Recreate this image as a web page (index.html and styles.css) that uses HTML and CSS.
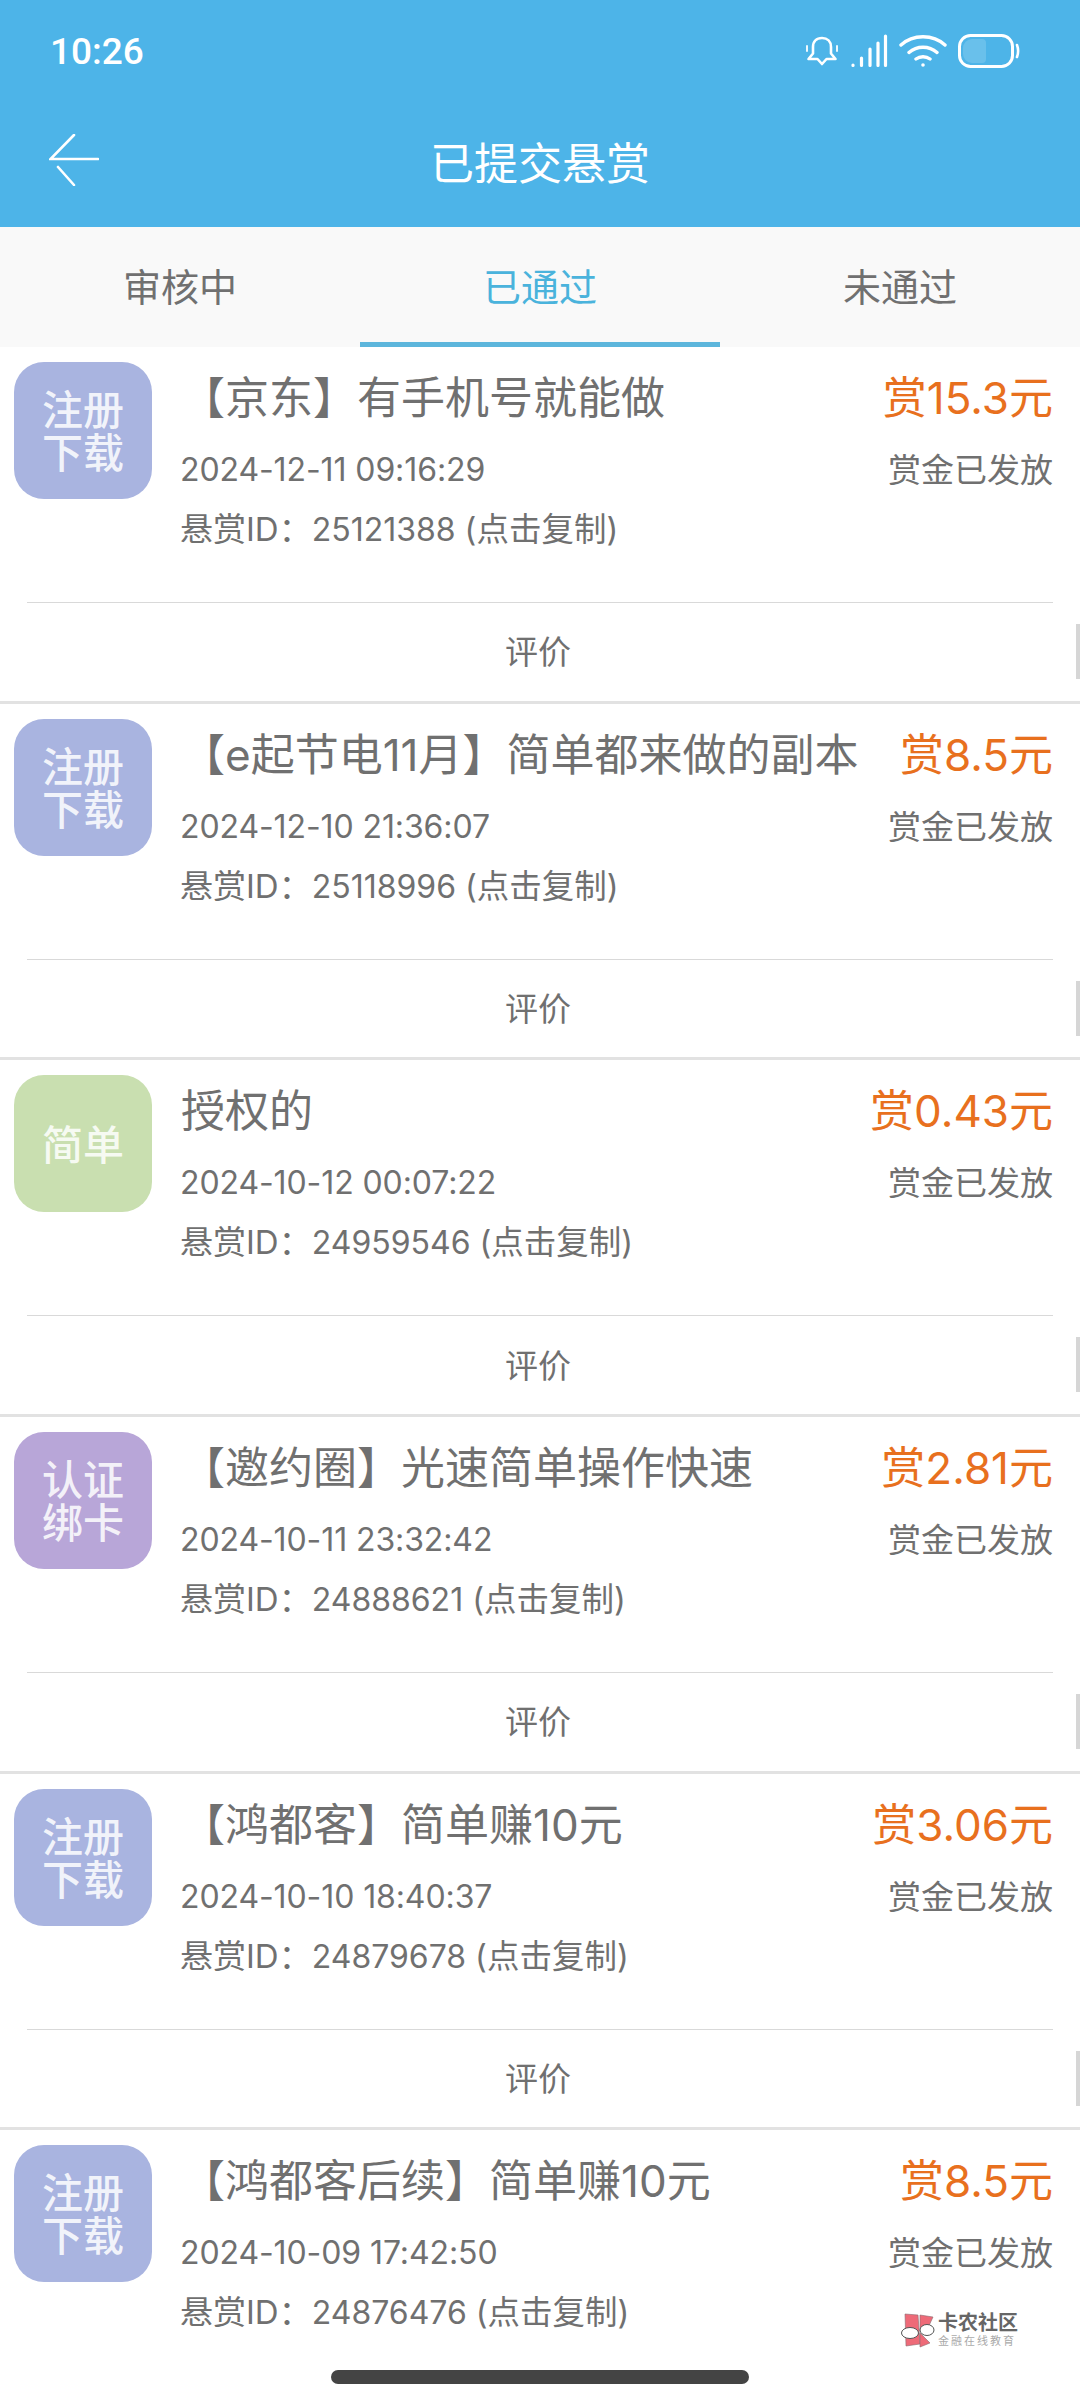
FILE: index.html
```html
<!DOCTYPE html>
<html lang="zh">
<head>
  <meta charset="UTF-8">
  <title>已提交悬赏</title>
  <link rel="stylesheet" href="styles.css">
</head>
<body>

<header class="top">
  <div class="status">
    <span class="time">10:26</span>
    <div class="status-icons">
      <svg class="ic-bell" viewBox="0 0 34 34" fill="none" stroke="#fff" stroke-width="2.6" stroke-linejoin="round" stroke-linecap="round">
        <path d="M17 4c-5.500 0-9 3.500-9 9v6.500L3.500 25h9L17 30l4.500-5h9L26 19.500V13c0-5.500-3.500-9-9-9z"/>
        <path d="M2 12v5M32 12v5" stroke-width="1.800"/>
      </svg>
      <svg class="ic-signal" viewBox="0 0 38 34" fill="none" stroke="#fff" stroke-width="3.200" stroke-linecap="round">
        <path d="M3 31v.5M11.500 24v7.500M20 15v16.500M28 9v22.500M35.500 2v29.500"/>
      </svg>
      <svg class="ic-wifi" viewBox="0 0 48 34" fill="none" stroke="#fff" stroke-width="3.400" stroke-linecap="round">
        <path d="M2 11C14 0 34 0 46 11M10 18.500c8-7 20-7 28 0M17 25c4-3 10-3 14 0"/>
        <circle cx="24" cy="31" r="1.800" fill="#fff" stroke="none"/>
      </svg>
      <svg class="ic-battery" viewBox="0 0 62 34" fill="none">
        <rect x="1.500" y="1.500" width="53" height="31" rx="11" stroke="#fff" stroke-width="3"/>
        <path d="M5 14a9 9 0 0 1 9-9h10a4 4 0 0 1 4 4v16a4 4 0 0 1-4 4H14a9 9 0 0 1-9-9z" fill="#fff" fill-opacity=".16"/>
        <path d="M59 11c1.500 4 1.500 8 0 12" stroke="#fff" stroke-width="2.600" stroke-linecap="round"/>
      </svg>
    </div>
  </div>
  <div class="navbar">
    <svg class="back" viewBox="0 0 50 52" fill="none" stroke="#fff" stroke-width="2.600" stroke-linecap="round">
      <path d="M25 1L1.500 25H49M9 33l16 18"/>
    </svg>
    <h1>已提交悬赏</h1>
  </div>
</header>

<nav class="tabs">
  <div class="tab">审核中</div>
  <div class="tab active">已通过</div>
  <div class="tab">未通过</div>
</nav>

<main class="list">
  <section class="card">
    <div class="card-main">
      <div class="badge blue">注册<br>下载</div>
      <div class="info">
        <div class="title">【京东】有手机号就能做</div>
        <div class="meta date">2024-12-11 09:16:29</div>
        <div class="meta"><span class="label">悬赏ID：</span>25121388 <span class="hint">(点击复制)</span></div>
      </div>
      <div class="side">
        <div class="reward">赏15.3元</div>
        <div class="paid">赏金已发放</div>
      </div>
    </div>
    <div class="action">评价</div>
    <i class="edge"></i>
  </section>

  <section class="card">
    <div class="card-main">
      <div class="badge blue">注册<br>下载</div>
      <div class="info">
        <div class="title">【e起节电11月】简单都来做的副本</div>
        <div class="meta date">2024-12-10 21:36:07</div>
        <div class="meta"><span class="label">悬赏ID：</span>25118996 <span class="hint">(点击复制)</span></div>
      </div>
      <div class="side">
        <div class="reward">赏8.5元</div>
        <div class="paid">赏金已发放</div>
      </div>
    </div>
    <div class="action">评价</div>
    <i class="edge"></i>
  </section>

  <section class="card">
    <div class="card-main">
      <div class="badge green">简单</div>
      <div class="info">
        <div class="title">授权的</div>
        <div class="meta date">2024-10-12 00:07:22</div>
        <div class="meta"><span class="label">悬赏ID：</span>24959546 <span class="hint">(点击复制)</span></div>
      </div>
      <div class="side">
        <div class="reward">赏0.43元</div>
        <div class="paid">赏金已发放</div>
      </div>
    </div>
    <div class="action">评价</div>
    <i class="edge"></i>
  </section>

  <section class="card">
    <div class="card-main">
      <div class="badge purple">认证<br>绑卡</div>
      <div class="info">
        <div class="title">【邀约圈】光速简单操作快速</div>
        <div class="meta date">2024-10-11 23:32:42</div>
        <div class="meta"><span class="label">悬赏ID：</span>24888621 <span class="hint">(点击复制)</span></div>
      </div>
      <div class="side">
        <div class="reward">赏2.81元</div>
        <div class="paid">赏金已发放</div>
      </div>
    </div>
    <div class="action">评价</div>
    <i class="edge"></i>
  </section>

  <section class="card">
    <div class="card-main">
      <div class="badge blue">注册<br>下载</div>
      <div class="info">
        <div class="title">【鸿都客】简单赚10元</div>
        <div class="meta date">2024-10-10 18:40:37</div>
        <div class="meta"><span class="label">悬赏ID：</span>24879678 <span class="hint">(点击复制)</span></div>
      </div>
      <div class="side">
        <div class="reward">赏3.06元</div>
        <div class="paid">赏金已发放</div>
      </div>
    </div>
    <div class="action">评价</div>
    <i class="edge"></i>
  </section>

  <section class="card">
    <div class="card-main">
      <div class="badge blue">注册<br>下载</div>
      <div class="info">
        <div class="title">【鸿都客后续】简单赚10元</div>
        <div class="meta date">2024-10-09 17:42:50</div>
        <div class="meta"><span class="label">悬赏ID：</span>24876476 <span class="hint">(点击复制)</span></div>
      </div>
      <div class="side">
        <div class="reward">赏8.5元</div>
        <div class="paid">赏金已发放</div>
      </div>
    </div>
  </section>
</main>

<div class="watermark">
  <svg class="wm-logo" viewBox="0 0 36 36" stroke="#8a6a70" stroke-width=".6">
    <path d="M5 1l13 1 2 29-14 2z" fill="#ee6a78"/>
    <path d="M20 2l13 2-6 13-7 1z" fill="#ee6a78"/>
    <path d="M20 20l10 10-10 4z" fill="#ee6a78"/>
    <ellipse cx="10" cy="20" rx="8.500" ry="5.500" fill="#fff" stroke="#555" stroke-width="1"/>
    <ellipse cx="27" cy="17" rx="7" ry="5.500" fill="#fff" stroke="#555" stroke-width="1"/>
  </svg>
  <div class="wm-text">
    <div class="wm-name">卡农社区</div>
    <div class="wm-sub">金融在线教育</div>
  </div>
</div>

<div class="home-bar"></div>

</body>
</html>
```

FILE: styles.css
```css
* {
  box-sizing: border-box;
}
html, body {
  height: 2400px;
}
body {
  margin: 0;
  overflow: hidden;
  position: relative;
  background: #fff;
  color: #707070;
  font-family: Inter, "Noto Sans CJK SC", sans-serif;
}

/* header */
.top {
  height: 227px;
  background: #4db4e8;
  color: #fff;
}
.status {
  height: 104px;
  padding: 34px 60px 0 50px;
  display: flex;
  justify-content: space-between;
  align-items: flex-start;
}
.time {
  font-family: Roboto, sans-serif;
  font-size: 37px;
  line-height: 36px;
  font-weight: 500;
}
.status-icons {
  display: flex;
  align-items: center;
  gap: 11px;
}
.status-icons svg {
  display: block;
  height: 34px;
}
.ic-bell { width: 34px; }
.ic-signal { width: 38px; }
.ic-wifi { width: 48px; }
.ic-battery { width: 62px; }
.navbar {
  height: 123px;
  position: relative;
  display: flex;
  align-items: center;
  justify-content: center;
}
.navbar h1 {
  margin: 0 0 3px;
  font-size: 44px;
  line-height: 60px;
  font-weight: 400;
}
.back {
  position: absolute;
  left: 49px;
  top: 30px;
  width: 50px;
  height: 52px;
}

/* tabs */
.tabs {
  height: 120px;
  display: flex;
  background: #f9f9f9;
}
.tab {
  flex: 1;
  display: flex;
  align-items: center;
  justify-content: center;
  padding-bottom: 6px;
  font-size: 38px;
  color: #707070;
}
.tab.active {
  color: #4ab3dc;
  border-bottom: 5px solid #5db6dc;
  padding-bottom: 1px;
}

/* list */
.card {
  height: 356.7px;
  position: relative;
  display: flex;
  flex-direction: column;
  border-bottom: 3px solid #e2e2e2;
}
.card:last-child {
  border-bottom: 0;
}
.card-main {
  height: 256px;
  flex-shrink: 0;
  margin: 0 27px 0 14px;
  padding-top: 15px;
  display: flex;
  position: relative;
}
.card-main::after {
  content: "";
  position: absolute;
  left: 13px;
  right: 0;
  bottom: 0;
  height: 1px;
  background: #d9d9d9;
}
.card:last-child .card-main::after {
  display: none;
}
.badge {
  width: 138px;
  height: 137px;
  flex-shrink: 0;
  border-radius: 30px;
  display: flex;
  align-items: center;
  justify-content: center;
  text-align: center;
  color: rgba(255, 255, 255, 0.85);
  font-size: 41px;
  font-weight: 500;
  line-height: 43px;
  padding-top: 3px;
}
.blue { background: #a9b4e0; }
.green { background: #c9dfb0; }
.purple { background: #b8a6d8; }
.info {
  flex: 1;
  min-width: 0;
  margin-left: 28px;
}
.title {
  height: 62px;
  margin-top: 5px;
  margin-left: 1px;
  font-size: 44px;
  line-height: 62px;
  white-space: nowrap;
}
.meta {
  font-size: 32px;
  line-height: 60px;
  white-space: nowrap;
}
.title + .meta {
  margin-top: 11px;
}
.date {
  letter-spacing: -0.1px;
}
.label {
  font-size: 33px;
  line-height: 1;
}
.hint {
  font-size: 32.500px;
  line-height: 1;
}
.side {
  text-align: right;
  flex-shrink: 0;
}
.reward {
  height: 62px;
  margin-top: 5px;
  color: #e8701e;
  font-size: 44px;
  line-height: 62px;
  white-space: nowrap;
}
.paid {
  margin-top: 11px;
  font-size: 33px;
  line-height: 60px;
}
.action {
  flex: 1;
  display: flex;
  align-items: center;
  justify-content: center;
  font-size: 33px;
  padding: 0 4px 3px 0;
}
.edge {
  position: absolute;
  right: 0;
  top: 277px;
  width: 4px;
  height: 55px;
  background: #d6d6d6;
}

/* overlays */
.watermark {
  position: absolute;
  left: 900px;
  top: 2313px;
  display: flex;
  gap: 2px;
}
.wm-logo {
  width: 36px;
  height: 36px;
}
.wm-name {
  font-size: 20px;
  line-height: 20px;
  font-weight: 700;
  color: #666;
}
.wm-sub {
  margin-top: 1px;
  font-size: 11px;
  line-height: 14px;
  letter-spacing: 2px;
  color: #aaa;
  white-space: nowrap;
}
.home-bar {
  position: absolute;
  left: 331px;
  top: 2370px;
  width: 418px;
  height: 14px;
  border-radius: 7px;
  background: #444;
}
```
